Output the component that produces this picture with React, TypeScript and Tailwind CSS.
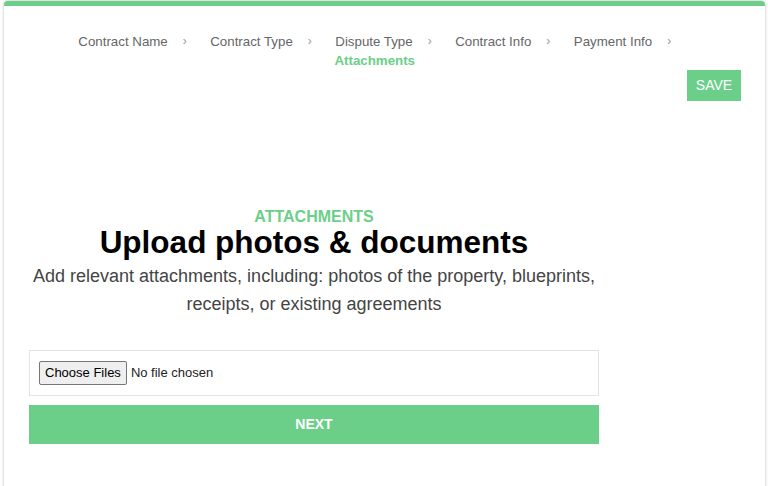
import React from "react";

const crumbs = ["Contract Name", "Contract Type", "Dispute Type", "Contract Info", "Payment Info"];

export default function App() {
  return (
    <div className="w-[768px] h-[486px] bg-white overflow-hidden" style={{ fontFamily: '"Liberation Sans", Arial, sans-serif' }}>
      <div className="ml-[4px] mt-[1px] w-[761px] h-[520px] bg-white border-t-[5px] border-[#6bcf89] rounded-t-[4px] shadow-[0_0_3px_rgba(0,0,0,0.3)]">
        <div className="pt-[26px] flex justify-center">
          <div className="w-[700px] flex flex-wrap justify-center text-[13.3px] leading-[19px] text-[#666]">
            {crumbs.map((c) => (
              <span key={c} className="pl-[2px] pr-[21.5px] flex items-center">
                <span>{c}</span>
                <span className="ml-[15px] text-[#999] text-[12px]">›</span>
              </span>
            ))}
            <span className="pl-[2px] pr-[21.5px] font-bold text-[#6bcf89]">Attachments</span>
          </div>
        </div>
        <div className="flex justify-end pr-[24px]">
          <button className="w-[54px] h-[31px] bg-[#6bcf89] text-white text-[14px]">SAVE</button>
        </div>
        <div className="ml-[25px] w-[570px] mt-[107px] flex flex-col items-center text-center">
          <div className="text-[16px] leading-[18px] font-bold text-[#6bcf89]">ATTACHMENTS</div>
          <h1 className="text-[31.5px] leading-[33px] font-bold text-black">Upload photos &amp; documents</h1>
          <p className="mt-[3px] text-[18px] leading-[28px] text-[#444]">
            Add relevant attachments, including: photos of the property, blueprints, receipts, or existing agreements
          </p>
          <div className="mt-[32px] w-full h-[46px] border border-[#e3e3e3] flex items-center px-[9px]">
            <span className="h-[24px] px-[5px] flex items-center bg-[#efefef] border border-[#767676] rounded-[2px] text-[13px] text-black">Choose Files</span>
            <span className="ml-[4px] text-[13px] text-[#222]">No file chosen</span>
          </div>
          <button className="mt-[9px] w-full h-[39px] bg-[#6bcf89] text-white font-bold text-[14px]">NEXT</button>
        </div>
      </div>
    </div>
  );
}
